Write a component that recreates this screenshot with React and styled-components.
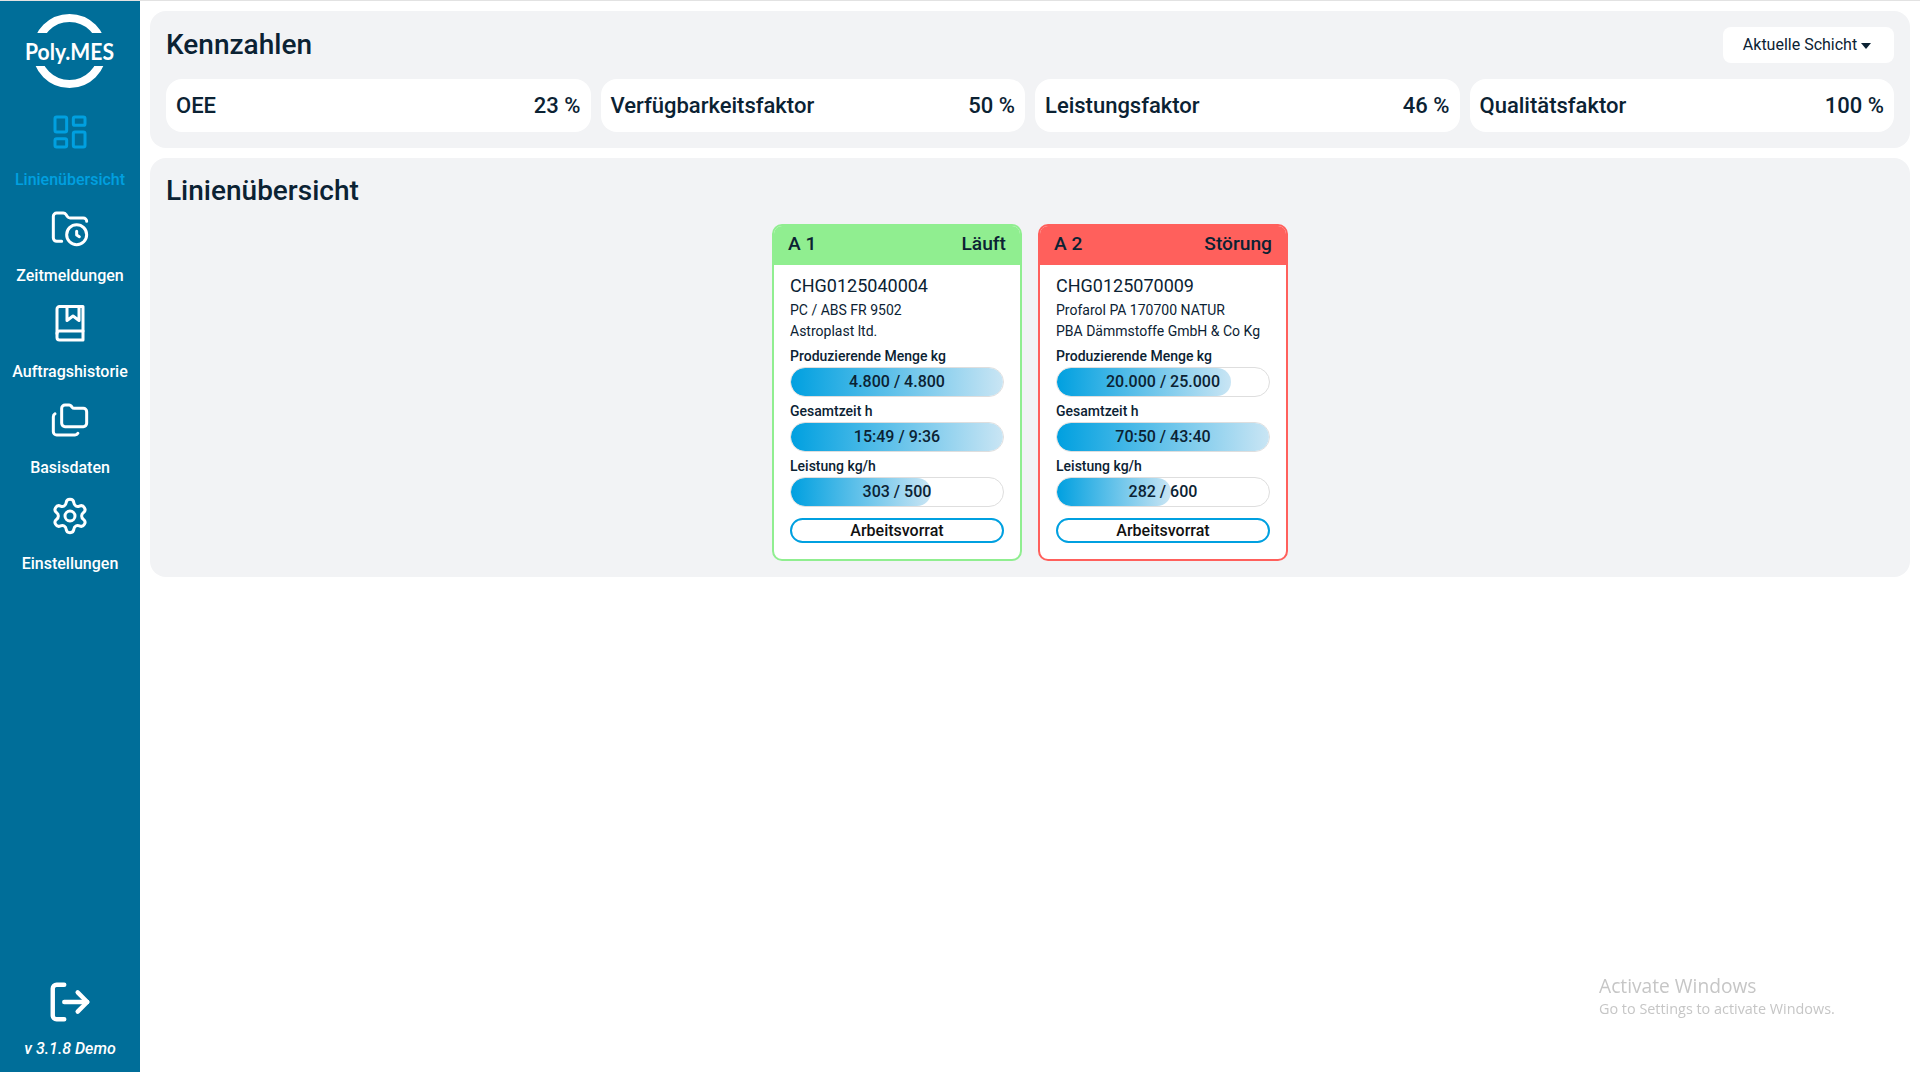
import React from "react";
import styled, { createGlobalStyle } from "styled-components";
import { Folders, FolderClock, LayoutDashboard, LogOut, Settings } from "lucide-react";

const GlobalStyle = createGlobalStyle`
  * {
    box-sizing: border-box;
  }

  html,
  body {
    margin: 0;
    padding: 0;
    background: #fff;
    font-family: Roboto, "Liberation Sans", sans-serif;
    color: #0b2233;
  }
`;

const AppWrapper = styled.div`
  display: flex;
  min-height: 1072px;
  border-top: 1px solid #e2e2e2;
`;

const Sidebar = styled.nav`
  flex: 0 0 140px;
  display: flex;
  flex-direction: column;
  background: #006e99;
  color: #fff;
`;

const LogoBox = styled.div`
  height: 103px;

  & > svg {
    display: block;
  }
`;

const LogoText = styled.text`
  font-family: Lato, sans-serif;
  font-size: 23px;
  font-weight: 700;
  fill: #fff;
`;

const NavItem = styled.a`
  height: 96px;
  padding-top: 8px;
  display: flex;
  flex-direction: column;
  align-items: center;
  color: ${({ $active }) => ($active ? "#00a0e0" : "#fff")};
`;

const NavIcon = styled.div`
  height: 40px;
  width: 40px;
  margin-bottom: 17px;

  & > svg {
    display: block;
  }
`;

const NavLabel = styled.span`
  font-size: 16px;
  line-height: 22px;
  font-weight: 500;
  white-space: nowrap;
`;

const SidebarFooter = styled.div`
  margin-top: auto;
  padding-bottom: 13px;
  display: flex;
  flex-direction: column;
  align-items: center;
`;

const LogoutIcon = styled.div`
  height: 46px;
  margin-top: -2px;

  & > svg {
    display: block;
  }
`;

const Version = styled.div`
  margin-top: 13px;
  font-size: 16px;
  line-height: 21px;
  font-weight: 500;
  font-style: italic;
`;

const Main = styled.main`
  flex: 1;
  min-width: 0;
  padding: 10px 10px 0;
  display: flex;
  flex-direction: column;
  gap: 10px;
`;

const Panel = styled.section`
  background: #f2f3f5;
  border-radius: 16px;
  padding: 16px;
`;

const PanelHeader = styled.div`
  display: flex;
  justify-content: space-between;
  align-items: center;
  height: ${({ $height }) => $height}px;
  margin-bottom: 16px;
`;

const Title = styled.h2`
  margin: 0;
  font-size: 28px;
  line-height: 34px;
  font-weight: 500;
`;

const DropdownButton = styled.button`
  width: 171px;
  height: 36px;
  padding: 0 3px 2px 0;
  border: 0;
  border-radius: 8px;
  background: #fff;
  color: #0b2233;
  font-family: inherit;
  font-size: 16px;
  display: flex;
  align-items: center;
  justify-content: center;
  gap: 4px;
`;

const Caret = styled.span`
  width: 0;
  height: 0;
  margin-top: 3px;
  border-left: 5.5px solid transparent;
  border-right: 5.5px solid transparent;
  border-top: 6px solid currentColor;
`;

const KpiRow = styled.div`
  display: grid;
  grid-template-columns: repeat(4, 1fr);
  gap: 10px;
`;

const KpiCard = styled.div`
  height: 53px;
  padding: 0 10px;
  border-radius: 16px;
  background: #fff;
  display: flex;
  justify-content: space-between;
  align-items: center;
  font-size: 22px;
  font-weight: 500;
`;

const LineGrid = styled.div`
  display: flex;
  justify-content: center;
  gap: 16px;
`;

const LineCard = styled.article`
  width: 250px;
  border: 2px solid ${({ $color }) => $color};
  border-radius: 10px;
  background: #fff;
  overflow: hidden;
`;

const LineHeader = styled.header`
  height: 41px;
  margin: -2px -2px 0;
  padding: 0 16px 3px;
  background: ${({ $color }) => $color};
  display: flex;
  justify-content: space-between;
  align-items: center;
  font-size: 19.2px;
  font-weight: 500;
`;

const LineBody = styled.div`
  padding: 7px 16px 16px;
`;

const OrderNumber = styled.div`
  font-size: 18px;
  line-height: 28px;
`;

const OrderLine = styled.div`
  font-size: 14px;
  line-height: 21px;
`;

const Metric = styled.div`
  margin-top: 4px;
`;

const MetricLabel = styled.div`
  font-size: 14px;
  line-height: 21px;
  font-weight: 500;
`;

const Bar = styled.div`
  position: relative;
  height: 30px;
  border: 1px solid #dedede;
  border-radius: 15px;
  background: #fff;
  overflow: hidden;
`;

const BarFill = styled.div`
  height: 100%;
  border-radius: 15px;
  background: linear-gradient(to right, #00a0e0, #c9e5f4);
`;

const BarText = styled.span`
  position: absolute;
  inset: 0;
  padding-bottom: 1px;
  display: flex;
  align-items: center;
  justify-content: center;
  font-size: 16px;
  font-weight: 500;
`;

const WorkButton = styled.button`
  display: block;
  width: 100%;
  height: 25px;
  margin-top: 11px;
  padding: 0;
  border: 2px solid #00a0e0;
  border-radius: 13px;
  background: #fff;
  color: #111;
  font-family: inherit;
  font-size: 16px;
  font-weight: 500;
  line-height: 20px;
`;

const Watermark = styled.div`
  position: fixed;
  left: 1599px;
  top: 973px;
  color: #c6c6c6;
  font-family: "Open Sans", sans-serif;
  font-size: 14.4px;
  line-height: 20px;
`;

const WatermarkTitle = styled.div`
  font-size: 19.2px;
  line-height: 26px;
`;

const navItems = [
  { label: "Linienübersicht", icon: <LayoutDashboard size={40} strokeWidth={1.8} />, active: true },
  { label: "Zeitmeldungen", icon: <FolderClock size={40} strokeWidth={1.8} /> },
  {
    label: "Auftragshistorie",
    icon: (
      <svg width="40" height="40" viewBox="0 0 40 40" fill="none" stroke="currentColor" strokeWidth="3" strokeLinejoin="round" strokeLinecap="round">
        <path d="M9.5 2.5H33V36H9.5A2.5 2.5 0 0 1 7 33.5V5A2.5 2.5 0 0 1 9.5 2.5Z" />
        <path d="M7 29.5A2.5 2.5 0 0 1 9.5 27H33" />
        <path d="M17 2.5V16.5L23 12L29 16.5V2.5" />
      </svg>
    ),
  },
  { label: "Basisdaten", icon: <Folders size={40} strokeWidth={1.8} /> },
  { label: "Einstellungen", icon: <Settings size={40} strokeWidth={1.8} /> },
];

const kpis = [
  { label: "OEE", value: "23 %" },
  { label: "Verfügbarkeitsfaktor", value: "50 %" },
  { label: "Leistungsfaktor", value: "46 %" },
  { label: "Qualitätsfaktor", value: "100 %" },
];

const lines = [
  {
    name: "A 1",
    status: "Läuft",
    color: "#90ee90",
    order: "CHG0125040004",
    material: "PC / ABS FR 9502",
    customer: "Astroplast ltd.",
    metrics: [
      { label: "Produzierende Menge kg", text: "4.800 / 4.800", width: 100 },
      { label: "Gesamtzeit h", text: "15:49 / 9:36", width: 100 },
      { label: "Leistung kg/h", text: "303 / 500", width: 66 },
    ],
  },
  {
    name: "A 2",
    status: "Störung",
    color: "#ff605c",
    order: "CHG0125070009",
    material: "Profarol PA 170700 NATUR",
    customer: "PBA Dämmstoffe GmbH & Co Kg",
    metrics: [
      { label: "Produzierende Menge kg", text: "20.000 / 25.000", width: 82 },
      { label: "Gesamtzeit h", text: "70:50 / 43:40", width: 100 },
      { label: "Leistung kg/h", text: "282 / 600", width: 54 },
    ],
  },
];

const Logo = () => (
  <svg width="140" height="103" viewBox="0 0 140 103">
    <defs>
      <clipPath id="logo-ring">
        <rect x="0" y="0" width="140" height="32" />
        <rect x="0" y="65" width="140" height="38" />
      </clipPath>
    </defs>
    <circle cx="69.5" cy="50" r="33" fill="none" stroke="#fff" strokeWidth="8" clipPath="url(#logo-ring)" />
    <LogoText x="25" y="59" textLength="89" lengthAdjust="spacingAndGlyphs">
      Poly.MES
    </LogoText>
  </svg>
);

const App = () => {
  return (
    <AppWrapper>
      <GlobalStyle />
      <Sidebar>
        <LogoBox>
          <Logo />
        </LogoBox>
        {navItems.map((item) => (
          <NavItem key={item.label} $active={item.active}>
            <NavIcon>{item.icon}</NavIcon>
            <NavLabel>{item.label}</NavLabel>
          </NavItem>
        ))}
        <SidebarFooter>
          <LogoutIcon>
            <LogOut size={46} strokeWidth={2.3} />
          </LogoutIcon>
          <Version>v 3.1.8 Demo</Version>
        </SidebarFooter>
      </Sidebar>
      <Main>
        <Panel>
          <PanelHeader $height={36}>
            <Title>Kennzahlen</Title>
            <DropdownButton>
              Aktuelle Schicht
              <Caret />
            </DropdownButton>
          </PanelHeader>
          <KpiRow>
            {kpis.map((kpi) => (
              <KpiCard key={kpi.label}>
                <span>{kpi.label}</span>
                <span>{kpi.value}</span>
              </KpiCard>
            ))}
          </KpiRow>
        </Panel>
        <Panel>
          <PanelHeader $height={34}>
            <Title>Linienübersicht</Title>
          </PanelHeader>
          <LineGrid>
            {lines.map((line) => (
              <LineCard key={line.name} $color={line.color}>
                <LineHeader $color={line.color}>
                  <span>{line.name}</span>
                  <span>{line.status}</span>
                </LineHeader>
                <LineBody>
                  <OrderNumber>{line.order}</OrderNumber>
                  <OrderLine>{line.material}</OrderLine>
                  <OrderLine>{line.customer}</OrderLine>
                  {line.metrics.map((metric) => (
                    <Metric key={metric.label}>
                      <MetricLabel>{metric.label}</MetricLabel>
                      <Bar>
                        <BarFill style={{ width: `${metric.width}%` }} />
                        <BarText>{metric.text}</BarText>
                      </Bar>
                    </Metric>
                  ))}
                  <WorkButton>Arbeitsvorrat</WorkButton>
                </LineBody>
              </LineCard>
            ))}
          </LineGrid>
        </Panel>
      </Main>
      <Watermark>
        <WatermarkTitle>Activate Windows</WatermarkTitle>
        Go to Settings to activate Windows.
      </Watermark>
    </AppWrapper>
  );
};

export default App;
